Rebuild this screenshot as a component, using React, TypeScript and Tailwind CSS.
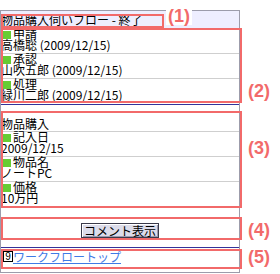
import React from "react";

const Sq = () => (
  <span className="inline-block w-[8px] h-[8px] bg-[#66cc33] ml-[2px] mr-[2px] mt-[2px] shrink-0" />
);

const Line = ({ children }: { children: React.ReactNode }) => (
  <div className="flex h-[11px] leading-[10px] whitespace-nowrap">{children}</div>
);

const Row = ({ label, value, last }: { label: string; value: string; last?: boolean }) => (
  <div className={"pb-[2px] " + (last ? "" : "border-b border-[#cfcfcf]")}>
    <Line>
      <Sq />
      <span>{label}</span>
    </Line>
    <Line>
      <span>{value}</span>
    </Line>
  </div>
);

const Tag = ({ children, white }: { children: React.ReactNode; white?: boolean }) => (
  <div
    className={
      "px-[2px] text-[#f26a6a] font-bold text-[18px] leading-[18px] font-['Liberation_Sans',sans-serif] " +
      (white ? "bg-white" : "")
    }
  >
    {children}
  </div>
);

export default function App() {
  return (
    <div className="relative w-[280px] h-[274px] bg-white overflow-hidden text-black text-[12px] font-['Noto_Sans_CJK_JP',sans-serif]">
      <div className="pt-[10px]">
        <div className="w-[240px] h-[263px] border border-[#9c9cab]">
          <div className="bg-[#eeeeff] h-[17px] pt-[3px] leading-[11px] whitespace-nowrap">
            物品購入伺いフロー - 終了
          </div>
          <div className="pt-[1px]">
            <Row label="申請" value="高橋聡 (2009/12/15)" />
            <Row label="承認" value="山吹五郎 (2009/12/15)" />
            <Row label="処理" value="緑川二郎 (2009/12/15)" last />
          </div>
          <div className="mt-[1px] border-t border-[#333399]" />
          <div className="pt-[13px] pb-[2px] border-b border-[#cfcfcf]">
            <div className="h-[11px] leading-[11px]">物品購入</div>
          </div>
          <Row label="記入日" value="2009/12/15" />
          <Row label="物品名" value="ノートPC" />
          <Row label="価格" value="10万円" />
          <div className="flex justify-center pt-[16px] pb-[9px]">
            <button className="h-[15px] px-[2px] border border-[#3a3a4a] bg-[#dcdcea] shadow-[inset_1px_1px_0_#ffffff,inset_-1px_-1px_0_#9a9ab0] leading-[11px] text-[12px] text-black">
              コメント表示
            </button>
          </div>
          <div className="border-t border-[#333399]" />
          <div className="pt-[3px] pl-[2px] flex items-start h-[14px] leading-[11px] whitespace-nowrap">
            <span className="inline-flex items-center justify-center w-[10px] h-[11px] border border-black text-[10px] leading-[10px] font-['Liberation_Sans',sans-serif]">
              9
            </span>
            <a href="#" className="text-[#3f7be6] underline">
              ワークフロートップ
            </a>
          </div>
        </div>
      </div>

      {/* annotation overlays */}
      <div className="absolute left-[1px] top-[14px] w-[163px] h-[14px] border-2 border-[#f26a6a]" />
      <div className="absolute left-[1px] top-[28px] w-[241px] h-[75px] border-2 border-[#f26a6a]" />
      <div className="absolute left-[1px] top-[111px] w-[241px] h-[97px] border-2 border-[#f26a6a]" />
      <div className="absolute left-[1px] top-[217px] w-[241px] h-[23px] border-2 border-[#f26a6a]" />
      <div className="absolute left-[1px] top-[249px] w-[241px] h-[20px] border-2 border-[#f26a6a]" />

      <div className="absolute left-[166px] top-[7px]"><Tag white>(1)</Tag></div>
      <div className="absolute left-[246px] top-[82px]"><Tag>(2)</Tag></div>
      <div className="absolute left-[246px] top-[139px]"><Tag>(3)</Tag></div>
      <div className="absolute left-[246px] top-[221px]"><Tag>(4)</Tag></div>
      <div className="absolute left-[246px] top-[248px]"><Tag>(5)</Tag></div>
    </div>
  );
}
